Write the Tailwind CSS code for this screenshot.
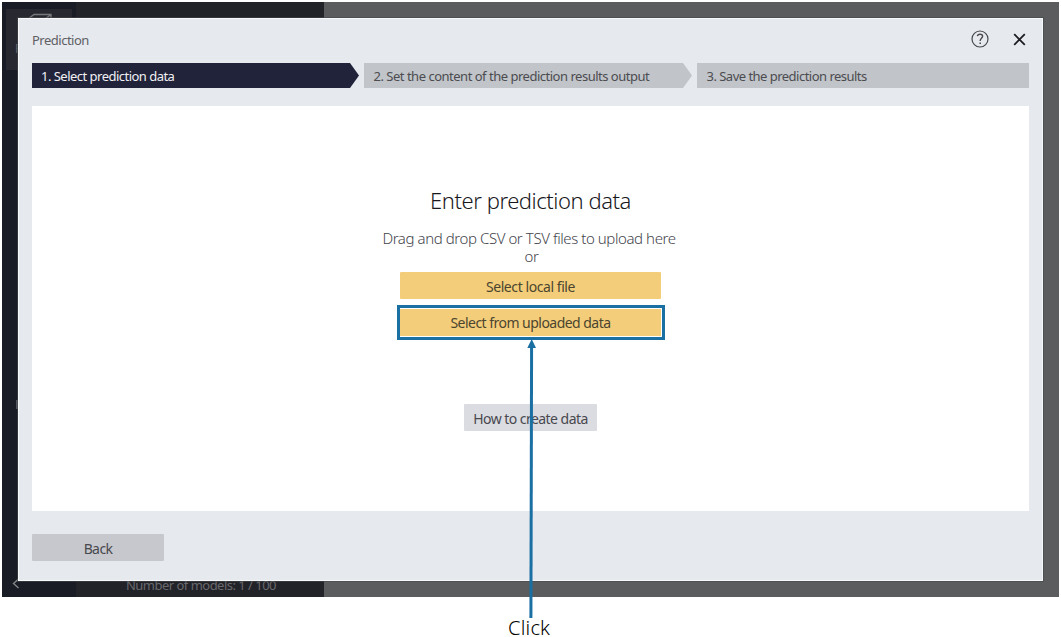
<!DOCTYPE html>
<html lang="en">
<head>
<meta charset="utf-8">
<title>Prediction</title>
<script src="https://cdn.jsdelivr.net/npm/@tailwindcss/browser@4"></script>
</head>
<body class="relative w-[1061px] h-[637px] bg-white overflow-hidden font-['Noto_Sans','Open_Sans',sans-serif] text-[13px] tracking-[-0.52px] text-[#4c4c50] whitespace-nowrap">

<!-- Dimmed application behind the dialog -->
<div class="flex ml-[2px] mt-[2px] w-[1057px] h-[595px] bg-[#5b5c5d]">
  <div class="relative w-[74px] bg-[#191c24] overflow-hidden">
    <div class="relative mt-[7px] ml-1 w-[66px] h-[61px] bg-[#282831]">
      <svg class="absolute left-[20px] top-[4px]" width="28" height="20" viewBox="0 0 28 20" fill="none" stroke="#77777b" stroke-width="1.3"><path d="M2 6 8 1.5h17v10M2 6h17l6-4.5M2 6v12M19 6v12"/></svg>
      <span class="absolute left-[9px] top-[31px] leading-[18px] text-xs text-[#68686d]">P</span>
    </div>
    <span class="absolute left-[14px] top-[398px] w-2 h-[9px] bg-[#53565d]"></span>
    <svg class="absolute left-[10px] top-[576px]" width="8" height="11" viewBox="0 0 8 11" fill="none" stroke="#858588" stroke-width="1.4"><path d="M6.5 1 1.5 5.5l5 4.5"/></svg>
  </div>
  <div class="flex items-end w-[248px] bg-[#222229] pl-[50px] pb-[3px]">
    <span class="leading-[18px] text-[#69696c]">Number of models: 1 / 100</span>
  </div>
</div>

<!-- Dialog -->
<main class="absolute left-[18px] top-[18px] w-[1025px] h-[563px] bg-[#e6e9ee] border border-[#f7f8fa] outline outline-[#45474a]/60 px-[13px] flex flex-col">
  <header class="flex items-center h-[44px] shrink-0">
    <h1 class="tracking-[-0.5px] flex-1 text-[#606064]">Prediction</h1>
    <svg class="mr-[24px] mb-[4px]" width="18" height="18" viewBox="0 0 18 18" fill="none" stroke="#47484b" stroke-width="1.2"><circle cx="9" cy="9" r="8"/><path d="M6.4 6.2C6.6 4.9 7.6 4.2 9 4.2c1.6 0 2.6.8 2.6 2.1 0 1.8-2.4 2-2.4 4.2v.6" stroke-width="1.4"/><path d="M9.2 12.4v1.5" stroke-width="1.5"/></svg>
    <svg class="mr-[3px] mb-[4px]" width="13" height="13" viewBox="0 0 13 13" fill="none" stroke="#1c1c22" stroke-width="1.8"><path d="m1.2 1.2 10.6 10.6M11.8 1.2 1.2 11.8"/></svg>
  </header>
  <ol class="flex h-[25px] shrink-0">
    <li class="w-[327px] mr-[5px] pl-[9px] pt-px leading-[25px] bg-[#20233a] text-[#f0f0f3] [clip-path:polygon(0_0,318px_0,100%_50%,318px_100%,0_100%)]">1. Select prediction data</li>
    <li class="w-[328px] mr-[5px] pl-[9.5px] pt-px leading-[25px] tracking-[-0.49px] bg-[#c1c4c9] [clip-path:polygon(0_0,319px_0,100%_50%,319px_100%,0_100%)]">2. Set the content of the prediction results output</li>
    <li class="flex-1 pl-[9.5px] pt-px leading-[25px] bg-[#c1c4c9]">3. Save the prediction results</li>
  </ol>
  <section class="mt-[18px] h-[405px] shrink-0 bg-white flex flex-col items-center">
    <h2 class="mt-[79px] leading-[30px] text-[22px] font-light tracking-[-0.45px] text-[#18181c]">Enter prediction data</h2>
    <p class="mt-[14px] mr-[3px] leading-[18px] text-[15px] font-light tracking-[-0.42px] text-center text-[#44444c]">Drag and drop CSV or TSV files to upload here<br><span class="pl-[5px]">or</span></p>
    <button class="mt-[7px] h-[27px] w-[261px] rounded-[1px] bg-[#f3cd7a] text-sm pt-[2px] tracking-[-0.43px] text-[#4b452f]">Select local file</button>
    <div class="mt-[6px] w-[268px] h-[35px] border-3 border-[#1a6fa3] flex justify-center pt-px">
      <button class="h-[27px] w-[261px] bg-[#f3cd7a] text-sm tracking-[-0.53px] text-[#4b452f]">Select from uploaded data</button>
    </div>
    <button class="mt-[64px] w-[133px] h-[27px] rounded-[1px] bg-[#dbdce1] text-sm pt-[2px] tracking-[-0.54px] text-[#48484f]">How to create data</button>
  </section>
  <footer class="pt-[23px]">
    <button class="block w-[132px] h-[27px] rounded-[1px] bg-[#c7c8cd] text-sm pt-[2px] tracking-[-0.6px] text-[#48484f]">Back</button>
  </footer>
</main>

<!-- Callout -->
<svg class="absolute left-[525px] top-[339px]" width="12" height="279" viewBox="0 0 12 279"><path d="M6.6 5 5.9 279" stroke="#1a6fa3" stroke-width="3"/><path d="M6.7 0 11 9H2.3z" fill="#1a6fa3"/></svg>
<p class="absolute left-[508px] top-[616px] leading-[23px] h-[21px] text-xl font-light tracking-[0.2px] text-black">Click</p>
</body>
</html>
